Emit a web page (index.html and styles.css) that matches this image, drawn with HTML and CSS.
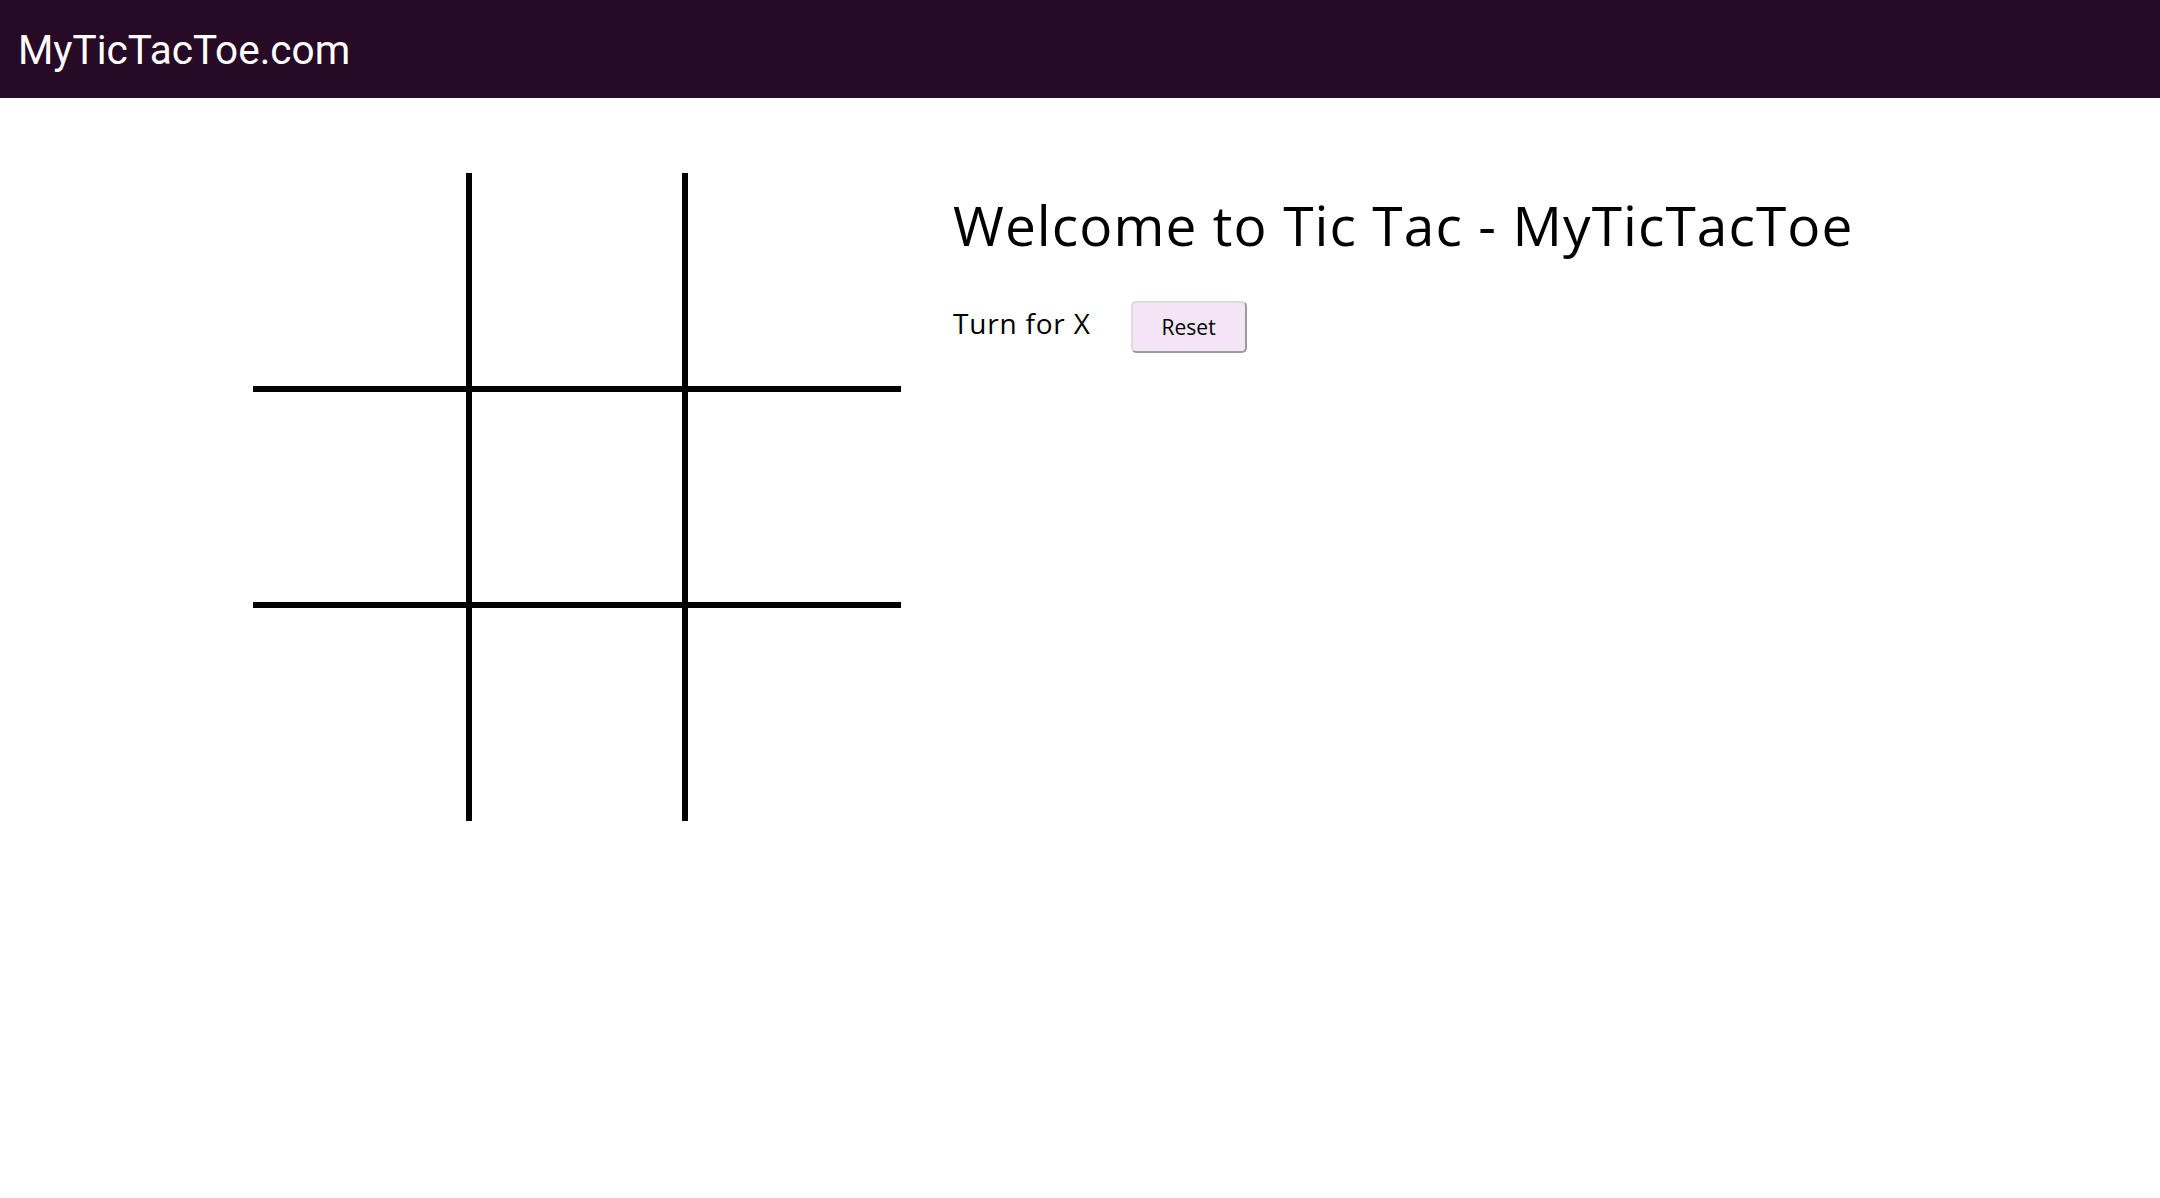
FILE: index.html
```html
<!DOCTYPE html>
<html lang="en">
<head>
<meta charset="utf-8">
<title>MyTicTacToe.com</title>
<link rel="stylesheet" href="styles.css">
</head>
<body>
<header class="topbar">
  <span class="brand">MyTicTacToe.com</span>
</header>
<main class="content">
  <div class="board">
    <div class="cell c-r c-b"></div>
    <div class="cell c-l c-r c-b"></div>
    <div class="cell c-l c-b"></div>
    <div class="cell c-r c-t c-b"></div>
    <div class="cell c-l c-r c-t c-b"></div>
    <div class="cell c-l c-t c-b"></div>
    <div class="cell c-r c-t"></div>
    <div class="cell c-l c-r c-t"></div>
    <div class="cell c-l c-t"></div>
  </div>
  <section class="info">
    <h1 class="title">Welcome to Tic Tac - MyTicTacToe</h1>
    <div class="status-row">
      <span class="status">Turn for X</span>
      <button class="reset" type="button">Reset</button>
    </div>
  </section>
</main>
</body>
</html>
```

FILE: styles.css
```css
html, body {
  margin: 0;
  padding: 0;
  background: #ffffff;
}

.topbar {
  height: 98px;
  background: #270a26;
  display: flex;
  align-items: center;
  padding-left: 18px;
  box-sizing: border-box;
}

.brand {
  font-family: Roboto, "Liberation Sans", sans-serif;
  font-size: 40.5px;
  color: #ffffff;
  line-height: 1;
  margin-top: 2px;
}

.content {
  display: flex;
  align-items: flex-start;
  padding-left: 253px;
  padding-top: 75px;
  gap: 52px;
}

.board {
  display: grid;
  grid-template-columns: repeat(3, 216px);
  grid-template-rows: repeat(3, 216px);
  flex: none;
}

.cell {
  box-sizing: border-box;
}

.c-r { border-right: 3px solid #000; }
.c-l { border-left: 3px solid #000; }
.c-t { border-top: 3px solid #000; }
.c-b { border-bottom: 3px solid #000; }

.info {
  font-family: "Open Sans", "Noto Sans", sans-serif;
  color: #000;
}

.title {
  font-family: "Open Sans", "Noto Sans", sans-serif;
  font-weight: 400;
  font-size: 55px;
  margin: 19px 0 0 0;
  line-height: 1.2;
  letter-spacing: 1.1px;
}

.status-row {
  display: flex;
  align-items: center;
  gap: 40px;
  margin-top: 43px;
}

.status {
  font-size: 28px;
  letter-spacing: 0.8px;
  margin-top: -8px;
}

.reset {
  width: 116px;
  height: 52px;
  background: #f3e5f5;
  border: 2px solid;
  border-color: #dcdcdc #9c9c9c #9c9c9c #dcdcdc;
  border-radius: 5px;
  font-family: "Open Sans", "Noto Sans", sans-serif;
  font-size: 21px;
  color: #000;
  padding: 0;
}
```
